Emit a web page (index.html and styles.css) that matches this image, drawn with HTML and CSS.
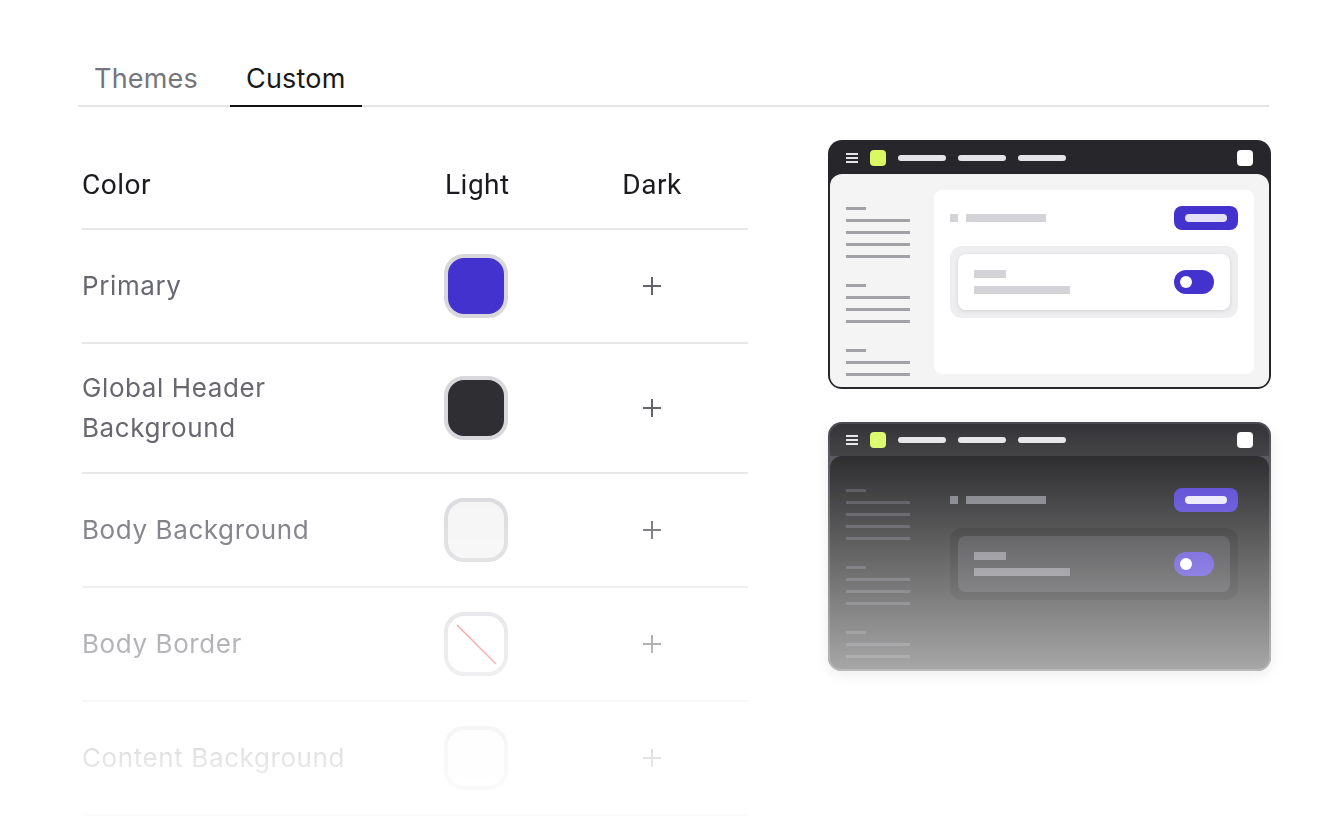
FILE: index.html
```html
<!DOCTYPE html>
<html lang="en">
<head>
<meta charset="utf-8">
<title>Custom theme</title>
<link rel="stylesheet" href="styles.css">
</head>
<body>
<div class="page">
  <nav class="tabs">
    <button class="tab">Themes</button>
    <button class="tab active">Custom</button>
  </nav>
  <div class="content">
    <div class="table">
      <div class="row head">
        <div class="c-label">Color</div>
        <div class="c-light">Light</div>
        <div class="c-dark">Dark</div>
      </div>
      <div class="row">
        <div class="c-label label">Primary</div>
        <div class="c-light"><span class="swatch sw-primary"></span></div>
        <div class="c-dark"><svg class="plus" viewBox="0 0 20 20"><path d="M10 1v18M1 10h18"/></svg></div>
      </div>
      <div class="row">
        <div class="c-label label">Global Header Background</div>
        <div class="c-light"><span class="swatch sw-header"></span></div>
        <div class="c-dark"><svg class="plus" viewBox="0 0 20 20"><path d="M10 1v18M1 10h18"/></svg></div>
      </div>
      <div class="row">
        <div class="c-label label">Body Background</div>
        <div class="c-light"><span class="swatch sw-body"></span></div>
        <div class="c-dark"><svg class="plus" viewBox="0 0 20 20"><path d="M10 1v18M1 10h18"/></svg></div>
      </div>
      <div class="row">
        <div class="c-label label">Body Border</div>
        <div class="c-light"><span class="swatch sw-none"><svg viewBox="0 0 56 56"><path d="M9 9L48 48"/></svg></span></div>
        <div class="c-dark"><svg class="plus" viewBox="0 0 20 20"><path d="M10 1v18M1 10h18"/></svg></div>
      </div>
      <div class="row">
        <div class="c-label label">Content Background</div>
        <div class="c-light"><span class="swatch sw-content"></span></div>
        <div class="c-dark"><svg class="plus" viewBox="0 0 20 20"><path d="M10 1v18M1 10h18"/></svg></div>
      </div>
    </div>

    <div class="previews">
      <div class="pv light">
        <div class="pv-top">
          <svg class="burger" viewBox="0 0 12 10"><path d="M0 1h12M0 5h12M0 9h12"/></svg>
          <span class="logo"></span>
          <span class="nav-pill"></span><span class="nav-pill"></span><span class="nav-pill"></span>
          <span class="grow"></span>
          <span class="avatar"></span>
        </div>
        <div class="pv-body">
          <div class="side">
            <div class="grp"><i class="sl short"></i><i class="sl"></i><i class="sl"></i><i class="sl"></i><i class="sl"></i></div>
            <div class="grp"><i class="sl short"></i><i class="sl"></i><i class="sl"></i><i class="sl"></i></div>
            <div class="grp"><i class="sl short"></i><i class="sl"></i><i class="sl"></i></div>
          </div>
          <div class="main">
            <div class="mhead">
              <i class="sq"></i><i class="bar b80"></i>
              <span class="grow"></span>
              <span class="btn"><i class="btn-pill"></i></span>
            </div>
            <div class="card-outer">
              <div class="card">
                <div class="card-text"><i class="bar b32"></i><i class="bar b96"></i></div>
                <span class="toggle"><i class="knob"></i></span>
              </div>
            </div>
          </div>
        </div>
      </div>

      <div class="pv dark">
        <div class="pv-top">
          <svg class="burger" viewBox="0 0 12 10"><path d="M0 1h12M0 5h12M0 9h12"/></svg>
          <span class="logo"></span>
          <span class="nav-pill"></span><span class="nav-pill"></span><span class="nav-pill"></span>
          <span class="grow"></span>
          <span class="avatar"></span>
        </div>
        <div class="pv-body">
          <div class="side">
            <div class="grp"><i class="sl short"></i><i class="sl"></i><i class="sl"></i><i class="sl"></i><i class="sl"></i></div>
            <div class="grp"><i class="sl short"></i><i class="sl"></i><i class="sl"></i><i class="sl"></i></div>
            <div class="grp"><i class="sl short"></i><i class="sl"></i><i class="sl"></i></div>
          </div>
          <div class="main">
            <div class="mhead">
              <i class="sq"></i><i class="bar b80"></i>
              <span class="grow"></span>
              <span class="btn"><i class="btn-pill"></i></span>
            </div>
            <div class="card-outer">
              <div class="card">
                <div class="card-text"><i class="bar b32"></i><i class="bar b96"></i></div>
                <span class="toggle"><i class="knob"></i></span>
              </div>
            </div>
          </div>
        </div>
      </div>
    </div>
  </div>
</div>
</body>
</html>
```

FILE: styles.css
```css
* { box-sizing: border-box; }
html, body { margin: 0; padding: 0; background: #fff; }
body { font-family: Inter, "Noto Sans", sans-serif; overflow: hidden; height: 822px; }

.page { padding: 58px 0 0 78px; width: 1269px; }

.tabs {
  display: flex;
  gap: 16px;
  border-bottom: 2px solid #e4e4e7;
}
.tab {
  font: 400 27px/40px Inter, sans-serif;
  letter-spacing: 0.2px;
  color: #75757d;
  background: none;
  border: 0;
  border-bottom: 2px solid transparent;
  margin-bottom: -2px;
  padding: 1px 16px 6px;
  cursor: pointer;
}
.tab.active { color: #18181b; border-bottom-color: #111113; }

.content { display: flex; margin-top: 32px; }

.table {
  width: 666px;
  margin-left: 4px;
  -webkit-mask-image: linear-gradient(to bottom, #000 320px, rgba(0,0,0,0.12) 640px);
  mask-image: linear-gradient(to bottom, #000 320px, rgba(0,0,0,0.12) 640px);
}
.row {
  display: grid;
  grid-template-columns: 362px 112px 192px;
  align-items: center;
  padding: 24px 0;
  border-bottom: 2px solid #e7e7e9;
}
.row.head {
  padding: 26px 0 23px;
  font: 400 28px/40px Roboto, sans-serif;
  letter-spacing: 0.5px;
  color: #1b1b1f;
}
.row.head .c-light { padding-left: 1px; }
.c-dark { display: flex; justify-content: center; }
.label {
  font-size: 26px;
  letter-spacing: 0.6px;
  line-height: 40px;
  color: #67676f;
  max-width: 300px;
}

.swatch {
  display: block;
  width: 64px;
  height: 64px;
  border: 4px solid #d8d8dc;
  border-radius: 20px;
}
.sw-primary { background: #4332cd; }
.sw-header { background: #2f2e33; }
.sw-body { background: #f4f4f5; }
.sw-none { background: #fff; }
.sw-none svg { display: block; width: 56px; height: 56px; }
.sw-none path { stroke: #f25f5f; stroke-width: 1.6; }
.sw-content { background: #fbfbfb; }

.plus { width: 20px; height: 20px; display: block; }
.plus path { stroke: #626268; stroke-width: 2; fill: none; }

/* previews */
.previews {
  margin-left: 80px;
  margin-top: 1px;
  display: flex;
  flex-direction: column;
  gap: 33px;
}
.pv {
  position: relative;
  width: 443px;
  height: 249px;
  padding: 2px;
  border-radius: 14px;
  overflow: hidden;
  display: flex;
  flex-direction: column;
}
.pv-top {
  height: 32px;
  flex: none;
  display: flex;
  align-items: center;
  gap: 12px;
  padding: 0 16px;
  border-radius: 12px 12px 0 0;
}
.burger { width: 12px; height: 10px; display: block; }
.burger path { stroke: #e4e4e7; stroke-width: 2; }
.logo { width: 16px; height: 16px; border-radius: 4px; background: #dbf862; }
.nav-pill { width: 48px; height: 6px; border-radius: 3px; background: #e4e4e7; }
.grow { flex: 1; }
.avatar { width: 16px; height: 16px; border-radius: 4px; background: #fff; }

.pv-body {
  flex: 1;
  display: flex;
  gap: 24px;
  padding: 16px;
  border-radius: 12px;
  overflow: hidden;
}
.side { width: 64px; padding-top: 17px; flex: none; }
.grp { display: flex; flex-direction: column; gap: 9px; margin-bottom: 26px; }
.sl { display: block; width: 64px; height: 3px; }
.sl.short { width: 20px; }

.main {
  width: 320px;
  height: 184px;
  flex: none;
  border-radius: 8px;
  padding: 16px;
}
.mhead { display: flex; align-items: center; height: 24px; }
.sq { display: block; width: 8px; height: 8px; margin-right: 8px; }
.bar { display: block; height: 8px; }
.b80 { width: 80px; }
.b32 { width: 32px; }
.b96 { width: 96px; margin-top: 8px; }
.btn {
  width: 64px; height: 24px; border-radius: 8px;
  display: flex; align-items: center; justify-content: center;
}
.btn-pill { display: block; width: 42px; height: 8px; border-radius: 4px; }
.card-outer { margin-top: 16px; padding: 8px; border-radius: 12px; }
.card {
  display: flex;
  align-items: center;
  justify-content: space-between;
  padding: 16px;
  border-radius: 8px;
}
.toggle {
  width: 40px; height: 24px; border-radius: 12px;
  display: flex; align-items: center; padding-left: 6px;
}
.knob { display: block; width: 12px; height: 12px; border-radius: 50%; background: #fff; }

/* light variant */
.light { background: #27272b; }
.light .pv-body { background: #f4f4f5; border-radius: 12px 12px 11px 11px; }
.light .sl { background: #a1a1a6; }
.light .main { background: #fff; }
.light .sq, .light .bar { background: #d4d4d8; }
.light .btn { background: #4332cd; }
.light .btn-pill { background: #e2dff6; }
.light .card-outer { background: #eeeef0; }
.light .card { background: #fff; box-shadow: 0 1px 4px rgba(0,0,0,0.12); }
.light .toggle { background: #4332cd; }

/* dark variant */
.dark { background: #3f3f46; box-shadow: 0 4px 14px rgba(0,0,0,0.08); }
.dark .pv-top { background: #27272b; }
.dark .pv-body { background: #0d0d0f; border-radius: 12px 12px 11px 11px; }
.dark .sl { background: #34343a; }
.dark .main { background: transparent; }
.dark .sq, .dark .bar { background: #6b6b74; }
.dark .btn { background: #3d28cf; }
.dark .btn-pill { background: #e8e5fb; }
.dark .card-outer { background: #000; }
.dark .card { background: #1e1e21; }
.dark .toggle { background: #3d28cf; }
.dark::after {
  content: "";
  position: absolute;
  inset: 0;
  pointer-events: none;
  background: linear-gradient(to bottom, rgba(255,255,255,0.06), rgba(255,255,255,0.64));
}
```
